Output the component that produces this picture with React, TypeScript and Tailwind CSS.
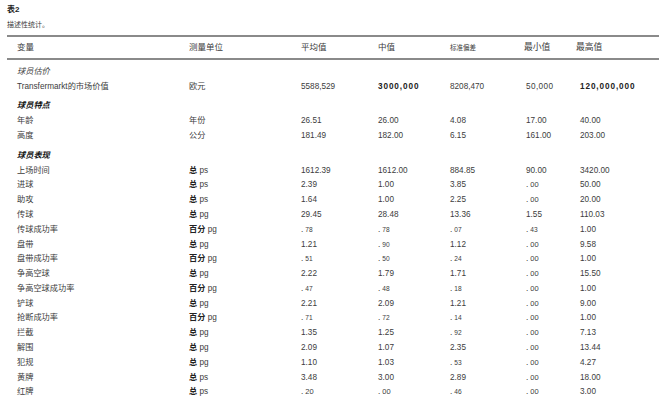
import React from "react";

type Cell = string;
type Row =
  | { kind: "section"; label: string; bold: boolean }
  | { kind: "data"; name: string; unit: string; unitBold?: string; vals: Cell[] };

const rows: Row[] = [
  { kind: "section", label: "球员估价", bold: false },
  { kind: "data", name: "Transfermarkt的市场价值", unit: "欧元", vals: ["5588,529", "#B3000,000", "8208,470", "#S50,000", "#B120,000,000"] },
  { kind: "section", label: "球员特点", bold: true },
  { kind: "data", name: "年龄", unit: "年份", vals: ["26.51", "26.00", "4.08", "17.00", "40.00"] },
  { kind: "data", name: "高度", unit: "公分", vals: ["181.49", "182.00", "6.15", "161.00", "203.00"] },
  { kind: "section", label: "球员表现", bold: true },
  { kind: "data", name: "上场时间", unitBold: "总", unit: "ps", vals: ["1612.39", "1612.00", "884.85", "90.00", "3420.00"] },
  { kind: "data", name: "进球", unitBold: "总", unit: "ps", vals: ["2.39", "1.00", "3.85", ".00", "50.00"] },
  { kind: "data", name: "助攻", unitBold: "总", unit: "ps", vals: ["1.64", "1.00", "2.25", ".00", "20.00"] },
  { kind: "data", name: "传球", unitBold: "总", unit: "pg", vals: ["29.45", "28.48", "13.36", "1.55", "110.03"] },
  { kind: "data", name: "传球成功率", unitBold: "百分", unit: "pg", vals: [".78", ".78", ".07", ".43", "1.00"] },
  { kind: "data", name: "盘带", unitBold: "总", unit: "pg", vals: ["1.21", ".90", "1.12", ".00", "9.58"] },
  { kind: "data", name: "盘带成功率", unitBold: "百分", unit: "pg", vals: [".51", ".50", ".24", ".00", "1.00"] },
  { kind: "data", name: "争高空球", unitBold: "总", unit: "pg", vals: ["2.22", "1.79", "1.71", ".00", "15.50"] },
  { kind: "data", name: "争高空球成功率", unitBold: "百分", unit: "pg", vals: [".47", ".48", ".18", ".00", "1.00"] },
  { kind: "data", name: "铲球", unitBold: "总", unit: "pg", vals: ["2.21", "2.09", "1.21", ".00", "9.00"] },
  { kind: "data", name: "抢断成功率", unitBold: "百分", unit: "pg", vals: [".71", ".72", ".14", ".00", "1.00"] },
  { kind: "data", name: "拦截", unitBold: "总", unit: "pg", vals: ["1.35", "1.25", ".92", ".00", "7.13"] },
  { kind: "data", name: "解围", unitBold: "总", unit: "pg", vals: ["2.09", "1.07", "2.35", ".00", "13.44"] },
  { kind: "data", name: "犯规", unitBold: "总", unit: "pg", vals: ["1.10", "1.03", ".53", ".00", "4.27"] },
  { kind: "data", name: "黄牌", unitBold: "总", unit: "ps", vals: ["3.48", "3.00", "2.89", ".00", "18.00"] },
  { kind: "data", name: "红牌", unitBold: "总", unit: "ps", vals: [".20", ".00", ".46", ".00", "3.00"] },
];

const colW = ["w-[172px]", "w-[112px]", "w-[77px]", "w-[72px]", "w-[76px]", "w-[54px]", "flex-1"];

function Value({ v }: { v: string }) {
  if (v.startsWith("#B")) {
    return <span className="font-bold tracking-[0.9px] text-[#222]">{v.slice(2)}</span>;
  }
  if (v.startsWith("#S")) {
    return <span className="tracking-[0.4px]">{v.slice(2)}</span>;
  }
  if (v.startsWith(".")) {
    const big = v === ".00" || v === ".20";
    return (
      <span>
        <span>.</span>
        <span className={big ? "ml-[2px] text-[7.5px]" : "ml-[2px] text-[6.6px]"}>{v.slice(1)}</span>
      </span>
    );
  }
  return <span>{v}</span>;
}

export default function App() {
  let sectionIndex = 0;
  return (
    <div
      className="w-[666px] h-[400px] overflow-hidden bg-white pl-[7px] pt-[4px] text-[#3c3c3c]"
      style={{ fontFamily: '"Liberation Sans", "Noto Sans CJK SC", sans-serif' }}
    >
      <div className="h-[11px] leading-[11px] text-[8px] font-bold text-[#222]">表2</div>
      <div className="mt-[4px] h-[11px] leading-[11px] text-[7px]">描述性统计。</div>
      <div className="mt-[5px] w-[652px] border-t-2 border-[#8a8a8a]" />
      <div className="flex h-[21px] w-[652px] items-center pl-[10px] text-[8.5px]">
        <div className={colW[0]}>变量</div>
        <div className={colW[1]}>测量单位</div>
        <div className={colW[2]}>平均值</div>
        <div className={colW[3]}>中值</div>
        <div className={`${colW[4]} text-[6.5px]`}>标准偏差</div>
        <div className={`${colW[5]} -ml-[2px] text-[8.8px]`}>最小值</div>
        <div className={`${colW[6]} -ml-[2px] text-[8.8px]`}>最高值</div>
      </div>
      <div className="w-[652px] border-t-2 border-[#8a8a8a]" />
      <div className="w-[652px] pl-[10px] pt-[4.6px] text-[8.2px]">
        {rows.map((r, i) => {
          if (r.kind === "section") {
            const mt = sectionIndex === 0 ? "" : sectionIndex === 1 ? "mt-[4.9px]" : "mt-[5px]";
            sectionIndex++;
            return (
              <div
                key={i}
                className={`flex h-[14.8px] items-center italic ${mt} ${
                  r.bold ? "font-bold text-[#111]" : "text-[#444]"
                }`}
              >
                {r.label}
              </div>
            );
          }
          return (
            <div key={i} className="flex h-[14.8px] items-center">
              <div className={colW[0]}>{r.name}</div>
              <div className={colW[1]}>
                {r.unitBold ? <span className="font-bold text-[#222]">{r.unitBold} </span> : null}
                {r.unit}
              </div>
              {r.vals.map((v, j) => (
                <div key={j} className={colW[j + 2]}>
                  <Value v={v} />
                </div>
              ))}
            </div>
          );
        })}
      </div>
    </div>
  );
}
